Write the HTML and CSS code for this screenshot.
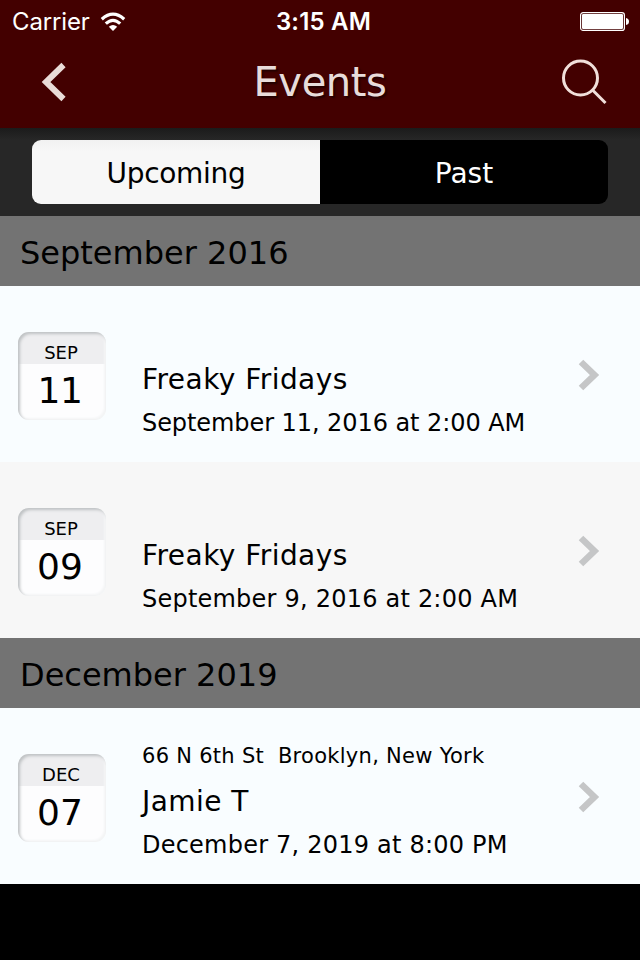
FILE: index.html
```html
<!DOCTYPE html>
<html lang="en">
<head>
<meta charset="utf-8">
<title>Events</title>
<link rel="stylesheet" href="styles.css">
</head>
<body>
<header class="header">
  <div class="status">
    <div class="carrier"><span>Carrier</span>
      <svg class="wifi" width="26" height="20" viewBox="0 0 26 20"><g fill="none" stroke="#fff" stroke-width="3.2"><path d="M1.8 7.2Q13-2.8 24.2 7.2"/><path d="M5.8 11.6Q13 5 20.2 11.6"/></g><path d="M8.8 14.8Q13 11 17.2 14.8L13 19Z" fill="#fff"/></svg>
    </div>
    <span class="time">3:15 AM</span>
    <svg class="battery" width="50" height="20" viewBox="0 0 50 20"><rect x=".6" y=".6" width="43.8" height="17.8" rx="2.5" fill="none" stroke="#fff" stroke-width="1.2"/><rect x="2" y="2" width="41" height="15" rx="1.2" fill="#fff"/><path d="M46 6Q49 6.500 49 9.500T46 13Z" fill="#fff"/></svg>
  </div>
  <nav class="navbar">
    <svg class="back" width="28" height="42" viewBox="0 0 28 42"><path d="M22.500 4L5 21L22.500 38" fill="none" stroke="#e9dcd8" stroke-width="6"/></svg>
    <h1>Events</h1>
    <svg class="search" width="48" height="48" viewBox="0 0 48 48"><g fill="none" stroke="#f1dfda" stroke-width="3"><circle cx="20.500" cy="20" r="17"/><path d="M32.500 32L45.500 45"/></g></svg>
  </nav>
</header>
<div class="tabs"><div class="tab active"><span>Upcoming</span></div><div class="tab"><span>Past</span></div></div>
<main>
  <h2>September 2016</h2>
  <article class="event">
    <div class="calendar"><div class="month">SEP</div><div class="day ones">11</div></div>
    <div class="details"><div class="place"></div><div class="name">Freaky Fridays</div><div class="date tight">September 11, 2016 at 2:00 AM</div></div>
    <svg class="arrow" width="24" height="34" viewBox="0 0 24 34"><path d="M4 4L17.500 17L4 30" fill="none" stroke="#c5c6c7" stroke-width="6.500"/></svg>
  </article>
  <article class="event alt">
    <div class="calendar"><div class="month">SEP</div><div class="day">09</div></div>
    <div class="details"><div class="place"></div><div class="name">Freaky Fridays</div><div class="date">September 9, 2016 at 2:00 AM</div></div>
    <svg class="arrow" width="24" height="34" viewBox="0 0 24 34"><path d="M4 4L17.500 17L4 30" fill="none" stroke="#c5c6c7" stroke-width="6.500"/></svg>
  </article>
  <h2>December 2019</h2>
  <article class="event">
    <div class="calendar"><div class="month">DEC</div><div class="day">07</div></div>
    <div class="details"><div class="place">66 N 6th St&nbsp; Brooklyn, New York</div><div class="name">Jamie T</div><div class="date">December 7, 2019 at 8:00 PM</div></div>
    <svg class="arrow" width="24" height="34" viewBox="0 0 24 34"><path d="M4 4L17.500 17L4 30" fill="none" stroke="#c5c6c7" stroke-width="6.500"/></svg>
  </article>
</main>
</body>
</html>
```
FILE: styles.css
```css
* { box-sizing: border-box; }
body { margin: 0; height: 960px; background: #000; color: #000; font-family: Verdana, "DejaVu Sans", sans-serif; overflow: hidden; }
.header { height: 128px; background: #430000; }
.status { height: 40px; display: grid; grid-template-columns: 1fr auto 1fr; align-items: center; padding: 0 10px 0 12px; color: #fff; font: 24px/40px Inter, sans-serif; }
.carrier { display: flex; align-items: center; gap: 10px; padding-top: 1px; }
.carrier span { letter-spacing: -.15px; }
.time { font-weight: 600; letter-spacing: .2px; padding: 2px 0 0 5px; }
.battery { justify-self: end; margin-top: 2px; }
.navbar { height: 88px; display: grid; grid-template-columns: 140px 1fr 140px; align-items: center; }
.back { margin: -4px 0 0 41px; }
.search { margin: -5px 32px 0 0; justify-self: end; }
h1 { margin: -4px 0 0; color: #e8dcda; font-size: 40px; font-weight: 400; line-height: 60px; text-align: center; letter-spacing: -.4px; text-shadow: 2px 2px 2px rgba(0,0,0,.5); }
.tabs { height: 88px; padding: 12px 32px; display: flex; background: linear-gradient(#1b1b1b, #272727 12px); }
.tab { flex: 1; height: 64px; background: #000; color: #fff; border-radius: 0 9px 9px 0; font-size: 28px; line-height: 68px; text-align: center; }
.active { background: linear-gradient(#f1f1f1, #f7f7f7 12px); color: #000; border-radius: 9px 0 0 9px; letter-spacing: -.3px; }
h2 { margin: 0; height: 70px; padding-left: 20px; background: #737373; font-size: 32px; font-weight: 400; line-height: 74px; }
.event { height: 176px; display: flex; background: #f9fdff; padding-left: 18px; }
.alt { background: #f7f7f7; }
.calendar { width: 88px; height: 88px; margin-top: 46px; border-radius: 11px; background: linear-gradient(#eeeef0 32px, #fdfdfe 32px); box-shadow: inset 2px 2px 3px #bfc2c4, inset -2px -2px 2px #f4f5f6; text-align: center; }
.month { height: 32px; font-size: 18px; line-height: 41px; padding-right: 2px; }
.day { font-size: 36px; line-height: 54px; padding-right: 4px; }
.ones { letter-spacing: -.5px; }
.details { margin-left: 36px; width: 435px; padding-top: 31px; white-space: nowrap; }
.place { height: 34px; font-size: 21px; line-height: 34px; letter-spacing: .28px; }
.name { height: 56px; font-size: 28px; line-height: 58px; letter-spacing: .45px; }
.date { height: 32px; font-size: 24px; line-height: 33px; letter-spacing: .22px; }
.tight { letter-spacing: -.07px; }
.arrow { margin-top: 72px; }
```
